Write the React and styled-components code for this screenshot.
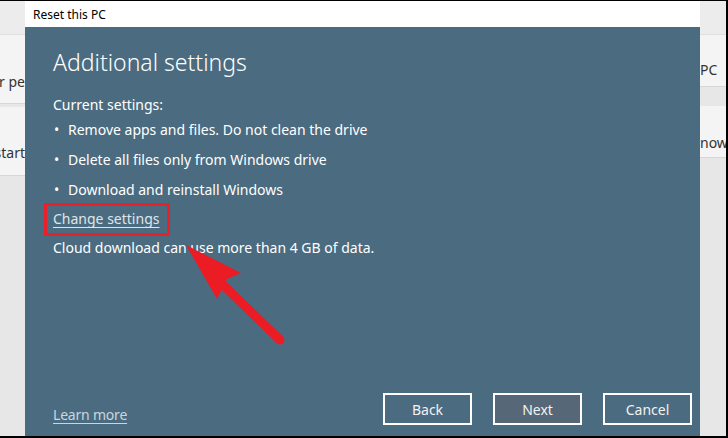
import React from "react";
import styled, { createGlobalStyle } from "styled-components";

const Global = createGlobalStyle`
  html, body { margin: 0; padding: 0; background: #f3f3f3; }
  * { box-sizing: border-box; }
`;

const Frame = styled.div`
  width: 728px;
  height: 438px;
  display: grid;
  grid-template-columns: 25px 675px 1fr;
  border-top: 1px solid #000;
  border-right: 2px solid #000;
  border-bottom: 2px solid #000;
  overflow: hidden;
  font-family: "Noto Sans", "Open Sans", sans-serif;
`;

const Side = styled.div`
  display: flex;
  flex-direction: column;
  background: #e7e7e7;
  overflow: hidden;
`;

const SideTop = styled.div`
  height: 34px;
  flex: none;
  background: #ececec;
  border-bottom: 1px solid #e0e0e0;
`;

const SideRow = styled.div`
  height: ${(p) => p.$h}px;
  flex: none;
  display: flex;
  align-items: flex-end;
  justify-content: ${(p) => (p.$left ? "flex-end" : "flex-start")};
  background: #f4f4f4;
  border-bottom: 1px solid #d6d6d6;
  margin-bottom: ${(p) => p.$mb || 0}px;
  padding-bottom: ${(p) => p.$pb}px;
  font-size: 14px;
  line-height: 20px;
  color: #333;
  white-space: nowrap;
`;

const Dialog = styled.div`
  display: flex;
  flex-direction: column;
  min-height: 0;
`;

const TitleBar = styled.div`
  height: 26px;
  background: #fff;
  display: flex;
  align-items: center;
  padding-left: 8px;
  font-size: 12px;
  color: #000;
`;

const Body = styled.div`
  flex: 1;
  background: #4b6b80;
  display: flex;
  flex-direction: column;
  padding: 17px 8px 11px 28px;
  color: #fff;
`;

const Heading = styled.h1`
  margin: 0;
  font-weight: 300;
  font-size: 23px;
  line-height: 36px;
  color: #fff;
`;

const Text = styled.div`
  font-size: 14px;
  line-height: 20px;
  margin-top: ${(p) => p.$mt || 0}px;
`;

const BulletList = styled.ul`
  list-style: none;
  margin: 5px 0 0 0;
  padding: 0;
  display: flex;
  flex-direction: column;
  gap: 10px;
`;

const Bullet = styled.li`
  font-size: 14px;
  line-height: 20px;
  display: flex;
  gap: 8px;
  &::before {
    content: "•";
    width: 6px;
    padding-left: 1px;
  }
`;

const LinkWrap = styled.div`
  position: relative;
  align-self: flex-start;
  margin-top: 7px;
  &::after {
    content: "";
    position: absolute;
    left: -9px;
    top: -4px;
    right: -11px;
    bottom: -7px;
    border: 3px solid #e8202a;
  }
`;

const Link = styled.a`
  font-size: 14px;
  line-height: 20px;
  color: ${(p) => p.$color || "#dfe6ea"};
  text-decoration: underline;
  text-underline-offset: 3px;
  display: inline-block;
  letter-spacing: ${(p) => p.$ls || 0}px;
`;

const Content = styled.div`
  position: relative;
  flex: 1;
  display: flex;
  flex-direction: column;
`;

const Arrow = styled.svg`
  position: absolute;
  left: 130px;
  top: 189px;
`;

const Footer = styled.div`
  display: flex;
  align-items: flex-end;
  justify-content: space-between;
`;

const Buttons = styled.div`
  display: flex;
  gap: 21px;
`;

const Button = styled.button`
  width: 89px;
  height: 32px;
  border: 2px solid #fff;
  background: ${(p) => (p.$primary ? "#566877" : "transparent")};
  color: #f2f2f2;
  font-family: inherit;
  font-size: 14px;
  padding: 0;
`;

export default function App() {
  return (
    <>
      <Global />
      <Frame>
        <Side>
          <SideTop />
          <SideRow $left $h={69} $pb={11} $mb={3}>r pe</SideRow>
          <SideRow $left $h={69} $pb={12}>start</SideRow>
        </Side>
        <Dialog>
          <TitleBar>Reset this PC</TitleBar>
          <Body>
            <Content>
              <Heading>Additional settings</Heading>
              <Text $mt={15}>Current settings:</Text>
              <BulletList>
                <Bullet>Remove apps and files. Do not clean the drive</Bullet>
                <Bullet>Delete all files only from Windows drive</Bullet>
                <Bullet>Download and reinstall Windows</Bullet>
              </BulletList>
              <LinkWrap>
                <Link>Change settings</Link>
              </LinkWrap>
              <Text $mt={9}>Cloud download can use more than 4 GB of data.</Text>
              <Arrow width="140" height="120" viewBox="0 0 140 120">
                <polygon points="3,12 58,40 44,46 34,66" fill="#ec1c24" />
                <line x1="36" y1="48" x2="97" y2="107" stroke="#ec1c24" strokeWidth="9" strokeLinecap="round" />
              </Arrow>
            </Content>
            <Footer>
              <Link $color="#c9d6df" $ls={-0.2}>Learn more</Link>
              <Buttons>
                <Button>Back</Button>
                <Button $primary>Next</Button>
                <Button>Cancel</Button>
              </Buttons>
            </Footer>
          </Body>
        </Dialog>
        <Side>
          <SideTop />
          <SideRow $h={52} $pb={6} $mb={19}>PC</SideRow>
          <SideRow $h={52} $pb={4}>now</SideRow>
        </Side>
      </Frame>
    </>
  );
}
